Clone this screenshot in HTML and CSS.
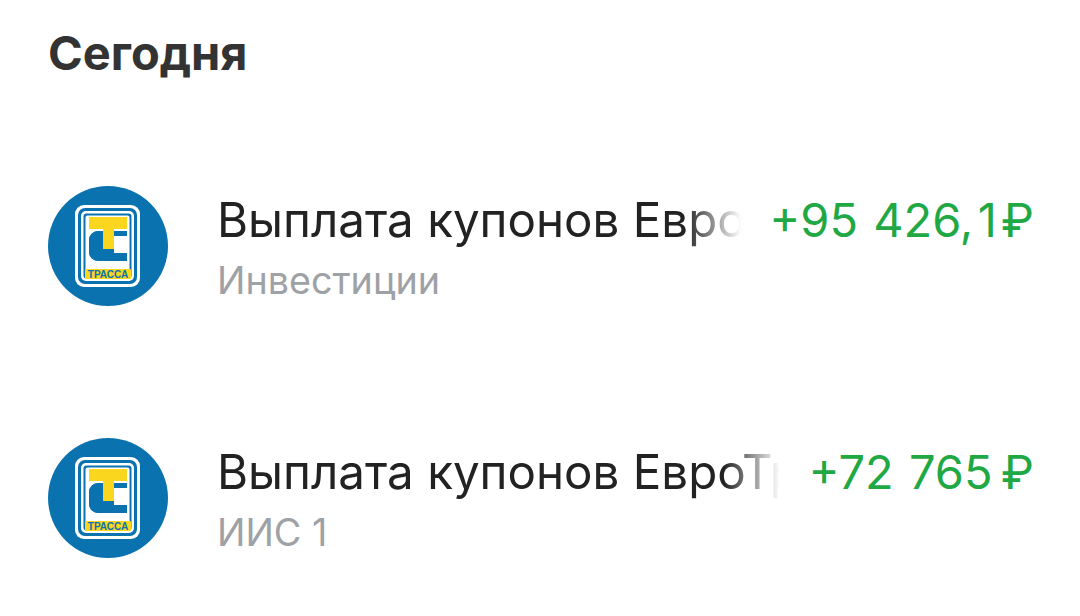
FILE: index.html
```html
<!DOCTYPE html>
<html lang="ru">
<head>
<meta charset="utf-8">
<title>Сегодня</title>
<link rel="stylesheet" href="styles.css">
</head>
<body>
<main class="page">
  <h1 class="heading">Сегодня</h1>
  <ul class="list">
    <li class="row">
      <svg class="logo" viewBox="0 0 120 120" aria-hidden="true">
        <circle cx="60" cy="60" r="60" fill="#0b72b0"/>
        <rect x="27" y="19" width="65" height="82" rx="9" fill="#fff"/>
        <rect x="30" y="22" width="59" height="76" rx="7" fill="#0b72b0"/>
        <rect x="33" y="25" width="53" height="70" rx="5" fill="#fff"/>
        <rect x="35.500" y="27.500" width="48" height="65" rx="3" fill="#0b72b0"/>
        <rect x="37.500" y="29.500" width="44" height="61" rx="2" fill="#fff"/>
        <path d="M50 45H79V50H66V67H79V75H50A9 9 0 0 1 41 66V54A9 9 0 0 1 50 45Z" fill="#0b72b0"/>
        <path d="M55 45V50A4 4 0 0 0 51 54V63A4 4 0 0 0 55 67H66V75H50A9 9 0 0 1 41 66V54A9 9 0 0 1 50 45Z" fill="#0b72b0"/>
        <path d="M41 31H79V43H66V63H55V43H41Z" fill="#fad61e"/>
        <rect x="37" y="83" width="46" height="10" rx="1" fill="#fad61e"/>
        <text x="60" y="91.800" class="logo-text" text-anchor="middle">ТРАССА</text>
      </svg>
      <div class="body">
        <div class="title">Выплата купонов ЕвроТрасса</div>
        <div class="sub">Инвестиции</div>
      </div>
      <div class="amount">+95 426,&#8202;1&#8202;₽</div>
    </li>
    <li class="row">
      <svg class="logo" viewBox="0 0 120 120" aria-hidden="true">
        <circle cx="60" cy="60" r="60" fill="#0b72b0"/>
        <rect x="27" y="19" width="65" height="82" rx="9" fill="#fff"/>
        <rect x="30" y="22" width="59" height="76" rx="7" fill="#0b72b0"/>
        <rect x="33" y="25" width="53" height="70" rx="5" fill="#fff"/>
        <rect x="35.500" y="27.500" width="48" height="65" rx="3" fill="#0b72b0"/>
        <rect x="37.500" y="29.500" width="44" height="61" rx="2" fill="#fff"/>
        <path d="M50 45H79V50H66V67H79V75H50A9 9 0 0 1 41 66V54A9 9 0 0 1 50 45Z" fill="#0b72b0"/>
        <path d="M55 45V50A4 4 0 0 0 51 54V63A4 4 0 0 0 55 67H66V75H50A9 9 0 0 1 41 66V54A9 9 0 0 1 50 45Z" fill="#0b72b0"/>
        <path d="M41 31H79V43H66V63H55V43H41Z" fill="#fad61e"/>
        <rect x="37" y="83" width="46" height="10" rx="1" fill="#fad61e"/>
        <text x="60" y="91.800" class="logo-text" text-anchor="middle">ТРАССА</text>
      </svg>
      <div class="body">
        <div class="title">Выплата купонов ЕвроТрасса</div>
        <div class="sub">ИИС 1</div>
      </div>
      <div class="amount">+72 765&#8201;₽</div>
    </li>
  </ul>
</main>
</body>
</html>
```
FILE: styles.css
```css
* { box-sizing: border-box; }
html, body { margin: 0; padding: 0; background: #fff; }
body { font-family: Inter, "Noto Sans", sans-serif; width: 1080px; height: 616px; overflow: hidden; }
.page { padding: 25px 46px 0 48px; }
.heading { margin: 0; font-size: 47px; line-height: 56px; font-weight: 700; color: #333; }
.list { list-style: none; margin: 105px 0 0; padding: 0; display: flex; flex-direction: column; gap: 132px; }
.row { display: flex; align-items: flex-start; height: 120px; }
.logo { width: 120px; height: 120px; flex: none; display: block; }
.logo-text { font-family: "Liberation Sans", sans-serif; font-size: 10px; font-weight: 700; fill: #0b72b0; }
.body { flex: 1; min-width: 0; margin-left: 49px; padding-top: 6px; }
.title { font-size: 47.5px; line-height: 56px; color: #222; white-space: nowrap; overflow: hidden;
  -webkit-mask-image: linear-gradient(to right, #000 calc(100% - 56px), transparent 100%);
  mask-image: linear-gradient(to right, #000 calc(100% - 56px), transparent 100%); }
.sub { font-size: 37.7px; line-height: 48px; color: #9ea1a5; margin-top: 8px; white-space: nowrap; }
.amount { flex: none; margin-left: 28px; margin-top: 6px; font-size: 47px; line-height: 56px; word-spacing: 2px; color: #1fa844; white-space: nowrap; }
```
